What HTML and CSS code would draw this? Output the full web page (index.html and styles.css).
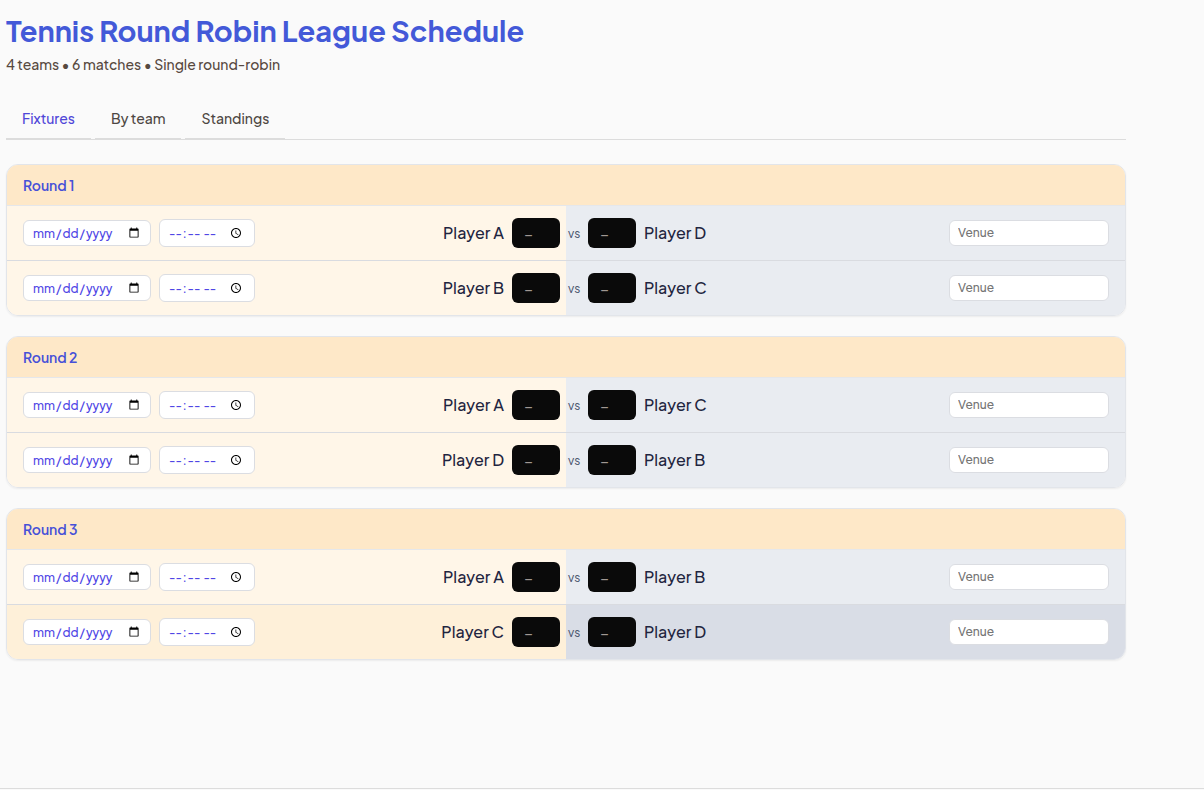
FILE: index.html
```html
<!DOCTYPE html>
<html lang="en">
<head>
<meta charset="utf-8">
<meta name="viewport" content="width=device-width, initial-scale=1">
<title>Tennis Round Robin League Schedule</title>
<link rel="stylesheet" href="styles.css">
</head>
<body>
<main class="page">
  <h1 class="title">Tennis Round Robin League Schedule</h1>
  <p class="summary">4 teams • 6 matches • Single round-robin</p>
  <nav class="tabs" aria-label="Views">
    <button class="tab active" type="button">Fixtures</button>
    <button class="tab" type="button">By team</button>
    <button class="tab" type="button">Standings</button>
  </nav>
  <div class="rounds" id="rounds"></div>
</main>
<footer class="footer"></footer>
<script src="app.js"></script>
</body>
</html>
```
FILE: app.js
```js
const rounds = [
  [["A", "D"], ["B", "C"]],
  [["A", "C"], ["D", "B"]],
  [["A", "B"], ["C", "D"]]
];

const match = ([home, away], highlighted) => `
  <div class="match${highlighted ? " highlighted" : ""}">
    <div class="side home">
      <input class="field date" type="date" aria-label="Date">
      <input class="field time" type="time" aria-label="Time">
      <span class="player">Player ${home}</span>
      <input class="score" type="text" inputmode="numeric" placeholder="–" aria-label="Player ${home} score">
    </div>
    <div class="side away">
      <span class="vs">vs</span>
      <input class="score" type="text" inputmode="numeric" placeholder="–" aria-label="Player ${away} score">
      <span class="player">Player ${away}</span>
      <input class="field venue" type="text" placeholder="Venue" aria-label="Venue">
    </div>
  </div>`;

document.getElementById("rounds").innerHTML = rounds.map((matches, i) => `
  <section class="card">
    <h2 class="card-title">Round ${i + 1}</h2>
    ${matches.map((m, j) => match(m, i === 2 && j === 1)).join("")}
  </section>`).join("");
```
FILE: styles.css
```css
* { box-sizing: border-box; }

body {
  margin: 0;
  min-height: 100vh;
  display: flex;
  flex-direction: column;
  background: #fafafa;
  color: #1f2540;
  font-family: "Plus Jakarta Sans", Inter, "Open Sans", sans-serif;
  font-size: 16px;
}

input, button { font-family: inherit; }

.page {
  flex: 1;
  width: 100%;
  max-width: 1132px;
  padding: 12px 6px 24px;
}

.title {
  margin: 0;
  color: #4359d8;
  font-size: 29px;
  font-weight: 700;
  line-height: 36px;
}

.summary {
  margin: 6px 0 0;
  color: #57493f;
  font-size: 14px;
  font-weight: 500;
  line-height: 20px;
}

.tabs {
  display: flex;
  gap: 4px;
  margin-top: 25px;
  border-bottom: 1px solid #dcdcdc;
}

.tab {
  margin-bottom: -1px;
  padding: 9px 16px;
  border: 0;
  border-bottom: 2px solid #dcdcdc;
  background: none;
  color: #4d4743;
  font-size: 14px;
  font-weight: 500;
  line-height: 21px;
}

.tab.active { color: #4f46d8; }

.rounds {
  display: grid;
  gap: 20px;
  margin-top: 24px;
}

.card {
  overflow: hidden;
  border: 1px solid #e2e5ea;
  border-radius: 12px;
  box-shadow: 0 1px 2px rgb(0 0 0 / 6%);
}

.card-title {
  margin: 0;
  padding: 10px 16px;
  border-bottom: 1px solid #e5e7eb;
  background: #fee8c8;
  color: #4650d8;
  font-size: 14px;
  font-weight: 600;
  line-height: 20px;
}

.match {
  display: grid;
  grid-template-columns: 1fr 1fr;
}

.match + .match { border-top: 1px solid #d9dbe0; }

.side {
  display: flex;
  align-items: center;
  gap: 8px;
  padding: 12px 16px;
}

.home {
  padding-right: 6px;
  background: #fff6e8;
}

.away {
  padding-left: 2px;
  background: #e9ecf1;
}

.highlighted .home { background: #fef0d9; }
.highlighted .away { background: #d9dde6; }

.home .player { margin-left: auto; }

.player {
  font-weight: 500;
  line-height: 24px;
}

.vs {
  width: 12px;
  color: #46516a;
  font-size: 12px;
}

.field {
  height: 26px;
  padding: 4px 8px;
  border: 1px solid #dbdde2;
  border-radius: 6px;
  background: #fff;
  color: #4f46e5;
  font-size: 12px;
  font-weight: 500;
}

.date { width: 128px; }

.time {
  width: 96px;
  height: 28px;
}

.venue {
  width: 160px;
  margin-left: auto;
  padding: 3px 8px 5px;
}

.field::placeholder { color: #757575; }

.score {
  width: 48px;
  height: 30px;
  padding: 4px 12px;
  border: 0;
  border-radius: 6px;
  background: #0a0a0a;
  color: #fff;
  font-size: 16px;
}

.score::placeholder { color: #a09893; }

.footer {
  height: 2px;
  border-top: 1px solid #dcdcdc;
}
```
